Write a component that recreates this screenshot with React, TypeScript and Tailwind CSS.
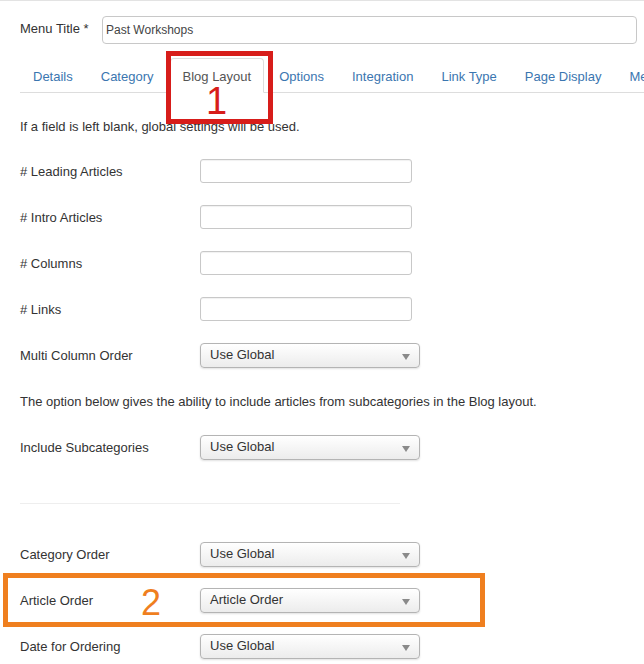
import React from "react";

const font = { fontFamily: '"Liberation Sans", Arial, Helvetica, sans-serif' };

function TextInput() {
  return (
    <div className="w-[212px] h-[24px] -mt-[3px] border border-[#c8c8c8] rounded-[3px] bg-white shadow-[inset_0_1px_1px_rgba(0,0,0,0.06)]" />
  );
}

function Select({ value }: { value: string }) {
  return (
    <div className="relative w-[220px] h-[25px] -mt-[2px] flex items-center pl-[9px] border border-[#b4b4b4] rounded-[4px] bg-gradient-to-b from-white to-[#ececec] shadow-[0_1px_2px_rgba(0,0,0,0.12)] text-[13px] text-[#333]">
      <span>{value}</span>
      <svg className="absolute right-[9px] top-[10px]" width="8" height="6" viewBox="0 0 8 6">
        <path d="M0 0 L8 0 L4 6 Z" fill="#8a8a8a" />
      </svg>
    </div>
  );
}

function Row({ label, children }: { label: string; children: React.ReactNode }) {
  return (
    <div className="flex items-center h-[46px] pl-[20px]">
      <div className="w-[180px] text-[13px] text-[#333]">{label}</div>
      {children}
    </div>
  );
}

const tabs = ["Details", "Category", "Blog Layout", "Options", "Integration", "Link Type", "Page Display", "Menu Assignment"];

export default function App() {
  return (
    <div style={font} className="relative w-[644px] h-[664px] overflow-hidden bg-white text-[#333] border-t border-[#e3e3e3]">
      <div className="flex items-center pl-[20px] pt-[15px]">
        <div className="w-[82px] -mt-[2px] text-[13px] text-[#333]">Menu Title *</div>
        <div className="w-[535px] h-[28px] flex items-center pl-[3px] border border-[#c8c8c8] rounded-[4px] bg-white text-[12px] text-[#444]">
          Past Workshops
        </div>
      </div>

      <div className="ml-[20px] mt-[14px] flex border-b border-[#dddddd] h-[35px] whitespace-nowrap">
        {tabs.map((t) =>
          t === "Blog Layout" ? (
            <div
              key={t}
              className="shrink-0 h-[35px] -mb-[1px] ml-[1px] mr-[2px] px-[12px] pt-[3px] flex items-center border border-[#dddddd] border-b-white rounded-t-[4px] bg-white text-[13px] text-[#555]"
            >
              {t}
            </div>
          ) : (
            <div key={t} className="shrink-0 h-[34px] mr-[2px] px-[13px] pt-[4px] flex items-center text-[13px] text-[#3b76b0]">
              {t}
            </div>
          )
        )}
      </div>

      <p className="mt-[25px] pl-[20px] leading-[18px] text-[13px] text-[#333]">
        If a field is left blank, global settings will be used.
      </p>

      <div className="mt-[13px]">
        <Row label="# Leading Articles">
          <TextInput />
        </Row>
        <Row label="# Intro Articles">
          <TextInput />
        </Row>
        <Row label="# Columns">
          <TextInput />
        </Row>
        <Row label="# Links">
          <TextInput />
        </Row>
        <Row label="Multi Column Order">
          <Select value="Use Global" />
        </Row>
        <div className="h-[46px] flex items-center pl-[20px] text-[13px] text-[#333]">
          The option below gives the ability to include articles from subcategories in the Blog layout.
        </div>
        <Row label="Include Subcategories">
          <Select value="Use Global" />
        </Row>
        <div className="mt-[32px] mb-[28px] ml-[20px] w-[380px] h-px bg-[#eeeeee]" />
        <Row label="Category Order">
          <Select value="Use Global" />
        </Row>
        <Row label="Article Order">
          <Select value="Article Order" />
        </Row>
        <Row label="Date for Ordering">
          <Select value="Use Global" />
        </Row>
      </div>

      {/* annotation 1 */}
      <div className="absolute left-[166px] top-[50px] w-[107px] h-[73px] border-[5px] border-[#d71d1a] pointer-events-none" />
      <div className="absolute left-[206px] top-[80px] text-[38px] leading-[40px] text-[#d71d1a]">1</div>

      {/* annotation 2 */}
      <div className="absolute left-[3px] top-[572px] w-[482px] h-[54px] border-[5px] border-[#ef7f1f] pointer-events-none" />
      <div className="absolute left-[141px] top-[582px] text-[36px] leading-[40px] text-[#ef7f1f]">2</div>
    </div>
  );
}
